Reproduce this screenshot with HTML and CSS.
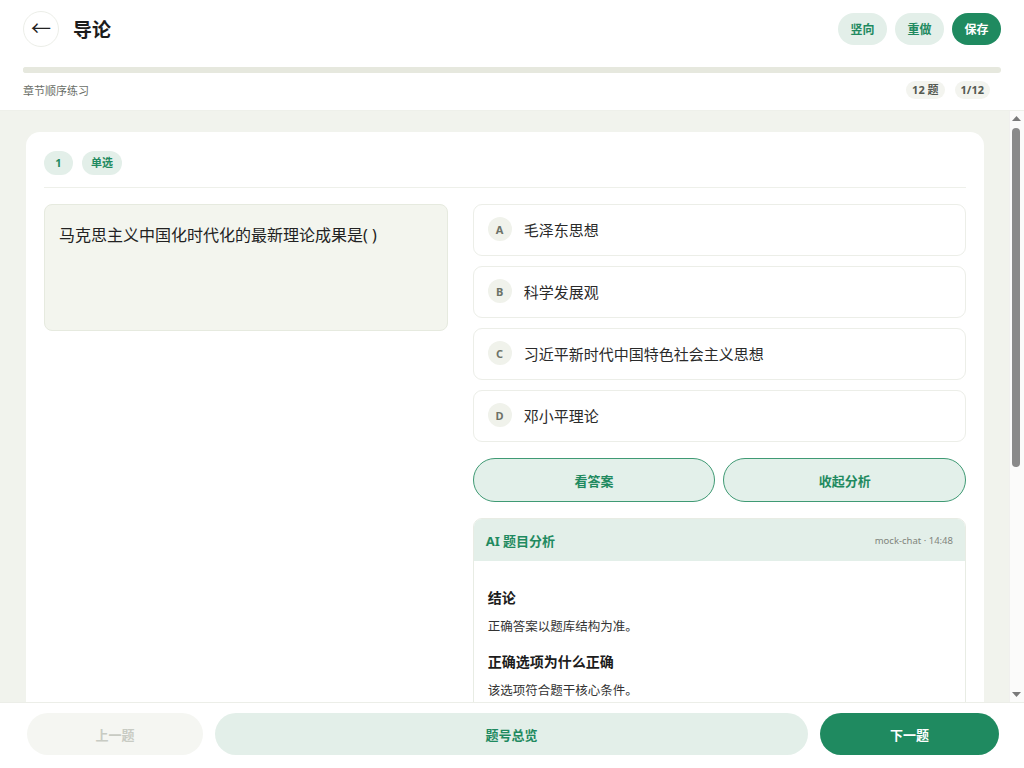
FILE: index.html
```html
<!DOCTYPE html>
<html lang="zh-CN">
<head>
    <meta charset="utf-8">
    <title>导论 - 章节顺序练习</title>
    <link rel="stylesheet" href="styles.css">
</head>
<body>
    <div class="page">

        <div class="topBar">
            <div class="topLeft">
                <button class="backBtn">&#8592;</button>
                <h1 class="title">导论</h1>
            </div>
            <div class="topActions">
                <button class="pillBtn">竖向</button>
                <button class="pillBtn">重做</button>
                <button class="pillBtn solid">保存</button>
            </div>
        </div>

        <div class="progressArea">
            <div class="progressTrack"><div class="progressFill" style="width: 8.3%;"></div></div>
            <div class="progressMeta">
                <span class="modeName">章节顺序练习</span>
                <div class="metaTags">
                    <span class="metaTag">12 题</span>
                    <span class="metaTag">1/12</span>
                </div>
            </div>
        </div>

        <div class="mainWrap">
            <div class="mainScroll">
                <div class="questionCard">
                    <div class="cardHead">
                        <span class="chip">1</span>
                        <span class="chip">单选</span>
                    </div>

                    <div class="cardBody">
                        <div class="stem">马克思主义中国化时代化的最新理论成果是( )</div>

                        <div class="rightCol">
                            <div class="options">
                                <div class="option"><span class="letter">A</span><span>毛泽东思想</span></div>
                                <div class="option"><span class="letter">B</span><span>科学发展观</span></div>
                                <div class="option"><span class="letter">C</span><span>习近平新时代中国特色社会主义思想</span></div>
                                <div class="option"><span class="letter">D</span><span>邓小平理论</span></div>
                            </div>

                            <div class="answerBtns">
                                <button class="outlineBtn">看答案</button>
                                <button class="outlineBtn">收起分析</button>
                            </div>

                            <div class="aiPanel">
                                <div class="aiHead">
                                    <span class="aiTitle">AI 题目分析</span>
                                    <span class="aiMeta">mock-chat · 14:48</span>
                                </div>
                                <div class="aiBody">
                                    <h3>结论</h3>
                                    <p>正确答案以题库结构为准。</p>
                                    <h3>正确选项为什么正确</h3>
                                    <p>该选项符合题干核心条件。</p>
                                    <h3>错误选项为什么错误</h3>
                                    <p>其余选项与题干限定的时代和理论成果不一致。</p>
                                    <h3>易混点</h3>
                                    <p>注意区分不同历史阶段形成的理论成果。</p>
                                </div>
                            </div>
                        </div>
                    </div>
                </div>
            </div>

            <!-- scrollbar rail -->
            <div class="scrollRail">
                <svg class="railArrow" width="15" height="15" viewBox="0 0 15 15"><path d="M3 10 L7.5 5 L12 10 Z" fill="#7a7a7a"/></svg>
                <div class="railTrack"><div class="railThumb"></div></div>
                <svg class="railArrow" width="15" height="15" viewBox="0 0 15 15"><path d="M3 5 L7.5 10 L12 5 Z" fill="#7a7a7a"/></svg>
            </div>
        </div>

        <div class="bottomBar">
            <button class="navBtn disabled">上一题</button>
            <button class="navBtn soft">题号总览</button>
            <button class="navBtn primary">下一题</button>
        </div>

    </div>
</body>
</html>
```

FILE: styles.css
```css
* {
    margin: 0;
    padding: 0;
    box-sizing: border-box;
    font-family: 'Noto Sans', 'Noto Sans CJK SC', sans-serif;
}

html, body {
    height: 100%;
}

body {
    background: #ffffff;
    color: #222;
}

button {
    border: none;
    cursor: pointer;
    font-family: inherit;
}

.page {
    height: 100vh;
    display: flex;
    flex-direction: column;
}

/* header */
.topBar {
    height: 60px;
    padding: 0 23px 2px;
    display: flex;
    align-items: center;
    justify-content: space-between;
    background: #fff;
}

.topLeft {
    display: flex;
    align-items: center;
    gap: 14px;
}

.backBtn {
    width: 36px;
    height: 36px;
    border-radius: 50%;
    background: #fff;
    border: 1px solid #eceee8;
    color: #222;
    font-size: 20px;
    line-height: 32px;
}

.title {
    font-size: 19px;
    font-weight: 700;
    color: #1c1c1c;
}

.topActions {
    display: flex;
    gap: 8px;
}

.pillBtn {
    width: 49px;
    height: 32px;
    border-radius: 16px;
    background: #e3efe9;
    color: #1f8a60;
    font-size: 12px;
    font-weight: 700;
}

.pillBtn.solid {
    background: #1f8a60;
    color: #fff;
}

/* progress */
.progressArea {
    padding: 7px 23px 11px;
    background: #fff;
}

.progressTrack {
    height: 6px;
    border-radius: 3px;
    background: #e6e8de;
    overflow: hidden;
}

.progressFill {
    height: 100%;
    background: #e6e8de;
}

.progressMeta {
    margin-top: 8px;
    height: 18px;
    display: flex;
    align-items: center;
    justify-content: space-between;
}

.modeName {
    font-size: 11px;
    color: #6b6f68;
}

.metaTags {
    display: flex;
    gap: 10px;
    margin-right: 11px;
}

.metaTag {
    height: 18px;
    line-height: 18px;
    padding: 0 6px;
    border-radius: 9px;
    background: #f3f4ef;
    color: #555a52;
    font-size: 11px;
    font-weight: 700;
}

/* scroll area */
.mainWrap {
    flex: 1;
    min-height: 0;
    display: flex;
    background: #f1f3ed;
    border-top: 1px solid #eef0ea;
}

.mainScroll {
    flex: 1;
    overflow: hidden;
    padding: 21px 25px 22px 26px;
}

.scrollRail {
    width: 15px;
    display: flex;
    flex-direction: column;
    background: #fbfbfa;
    border-left: 1px solid #f0f0ee;
}

.railArrow {
    display: block;
    margin-left: -1px;
}

.railTrack {
    flex: 1;
    padding-top: 2px;
}

.railThumb {
    width: 8px;
    height: 339px;
    margin-left: 2px;
    border-radius: 4px;
    background: #8a8a8a;
}

.questionCard {
    background: #fff;
    border-radius: 14px;
    padding: 19px 18px 24px;
}

.cardHead {
    display: flex;
    gap: 9px;
    padding-bottom: 12px;
    border-bottom: 1px solid #eef0ea;
}

.chip {
    height: 24px;
    line-height: 24px;
    min-width: 29px;
    padding: 0 9px;
    border-radius: 12px;
    background: #e3efe9;
    color: #1f8a60;
    font-size: 11px;
    font-weight: 700;
    text-align: center;
}

.cardBody {
    margin-top: 16px;
    display: grid;
    grid-template-columns: 9fr 11fr;
    gap: 25px;
    align-items: start;
}

.stem {
    height: 127px;
    padding: 18px 14px;
    background: #f3f5ee;
    border: 1px solid #e6eadf;
    border-radius: 8px;
    font-size: 16px;
    line-height: 24px;
    color: #222;
}

.options {
    display: flex;
    flex-direction: column;
    gap: 10px;
}

.option {
    height: 52px;
    padding: 0 14px 2px;
    display: flex;
    align-items: center;
    gap: 12px;
    border: 1px solid #eceee8;
    border-radius: 9px;
    font-size: 15px;
    color: #2a2a2a;
}

.letter {
    width: 24px;
    height: 24px;
    border-radius: 50%;
    background: #f0f2eb;
    color: #6d7268;
    font-size: 11px;
    font-weight: 700;
    display: flex;
    align-items: center;
    justify-content: center;
}

.answerBtns {
    margin-top: 16px;
    display: grid;
    grid-template-columns: 1fr 1fr;
    gap: 8px;
}

.outlineBtn {
    height: 44px;
    border-radius: 22px;
    border: 1px solid #3f9a74;
    background: #e3f0ea;
    color: #1f8a60;
    font-size: 13px;
    font-weight: 700;
}

.aiPanel {
    margin-top: 16px;
    border: 1px solid #e8ece4;
    border-radius: 9px;
    overflow: hidden;
}

.aiHead {
    height: 42px;
    padding: 0 12px;
    background: #e3efe9;
    display: flex;
    align-items: center;
    justify-content: space-between;
}

.aiTitle {
    font-size: 13px;
    font-weight: 700;
    color: #1f8a60;
}

.aiMeta {
    font-size: 9.5px;
    color: #7f847c;
}

.aiBody {
    padding: 26px 14px 20px;
    background: #fff;
}

.aiBody h3 {
    font-size: 14px;
    font-weight: 700;
    color: #1c1c1c;
    line-height: 22px;
}

.aiBody p {
    margin: 8px 0 14px;
    font-size: 12.5px;
    line-height: 20px;
    color: #333;
}

/* bottom nav */
.bottomBar {
    height: 66px;
    padding: 10px 25px 14px 27px;
    display: grid;
    grid-template-columns: 176px 1fr 179px;
    gap: 12px;
    background: #fff;
    border-top: 1px solid #eceee8;
}

.navBtn {
    height: 42px;
    border-radius: 21px;
    font-size: 13px;
    font-weight: 700;
}

.navBtn.disabled {
    background: #f5f6f2;
    color: #c8cbc3;
}

.navBtn.soft {
    background: #e3efe9;
    color: #1f8a60;
}

.navBtn.primary {
    background: #1f8a60;
    color: #fff;
}
```
